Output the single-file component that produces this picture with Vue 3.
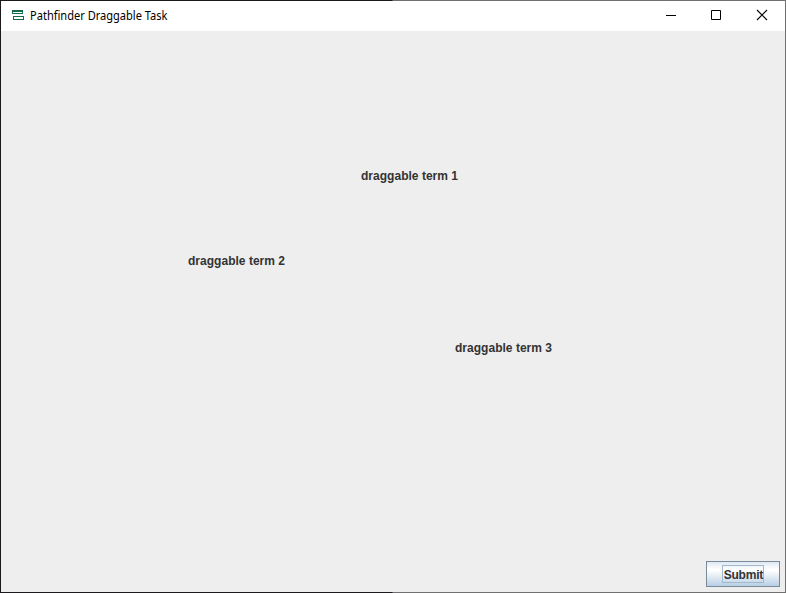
<script setup>
const terms = [
  { text: 'draggable term 1', x: 360, y: 137, w: 97 },
  { text: 'draggable term 2', x: 187, y: 222, w: 97 },
  { text: 'draggable term 3', x: 454, y: 309, w: 97 },
]
</script>

<template>
  <div class="window">
    <header class="titlebar">
      <svg class="logo" width="12" height="10" viewBox="0 0 12 10" shape-rendering="crispEdges">
        <path d="M0 0h11v4H0z M1 2v1h9V2z M1 6h11v4H1z M2 7v2h9V7z" fill="#0f6b48" fill-rule="evenodd" />
      </svg>
      <svg class="title" width="150" height="20" role="img">
        <text x="0" y="14" textLength="137.5" lengthAdjust="spacingAndGlyphs">Pathfinder Draggable Task</text>
      </svg>
      <div class="controls">
        <svg width="12" height="12" viewBox="0 0 12 12"><path d="M2 6.5h10" stroke="#000" /></svg>
        <svg width="12" height="12" viewBox="0 0 12 12"><path d="M1.5 1.5h9v9h-9z" fill="none" stroke="#000" /></svg>
        <svg width="12" height="12" viewBox="0 0 12 12"><path d="M1 1l10 10M11 1L1 11" stroke="#000" stroke-width="1.1" /></svg>
      </div>
    </header>
    <main class="canvas">
      <svg v-for="t in terms" :key="t.text" class="term" width="100" height="18" :style="{ left: t.x + 'px', top: t.y + 'px' }">
        <text x="0" y="12" :textLength="t.w" lengthAdjust="spacing">{{ t.text }}</text>
      </svg>
      <button class="submit"><span>Submit</span></button>
    </main>
  </div>
</template>

<style>
body {
  margin: 0;
  overflow: hidden;
}
</style>

<style scoped>
.window {
  box-sizing: border-box;
  width: 786px;
  height: 593px;
  padding: 1px;
  display: flex;
  flex-direction: column;
  background: linear-gradient(90deg, #1b191c 0 1px, transparent 1px), linear-gradient(90deg, #1b191c 392px, #707070 393px);
}
.titlebar {
  height: 30px;
  flex: none;
  display: flex;
  align-items: center;
  background: #fff;
}
.logo {
  margin-left: 11px;
  margin-bottom: 2px;
  flex: none;
}
.title {
  margin-left: 6px;
  flex: none;
  font: 12px "Noto Sans", "Open Sans", sans-serif;
  fill: #000;
}
.controls {
  margin-left: auto;
  padding: 0 17px 2px 0;
  display: flex;
  gap: 34px;
}
.controls svg {
  display: block;
}
.canvas {
  position: relative;
  flex: 1;
  display: flex;
  align-items: flex-end;
  justify-content: flex-end;
  padding: 0 5px 5px 0;
  background: #eee;
}
.term {
  position: absolute;
  font: bold 12px "Liberation Sans", Arial, sans-serif;
  fill: #333;
}
.submit {
  box-sizing: border-box;
  width: 74px;
  height: 26px;
  padding: 0;
  display: flex;
  align-items: center;
  justify-content: center;
  border: 1px solid #7a8a99;
  background: linear-gradient(#dde8f3 0, #fff 30%, #fff 35%, #b8cfe5 100%);
  color: #333;
  font: bold 12px/18px "Liberation Sans", Arial, sans-serif;
}
.submit span {
  box-sizing: border-box;
  width: 42px;
  height: 18px;
  display: flex;
  padding-left: 0.7px;
  border: 1px solid #a3b8cc;
  white-space: nowrap;
  letter-spacing: -0.2px;
}
</style>
